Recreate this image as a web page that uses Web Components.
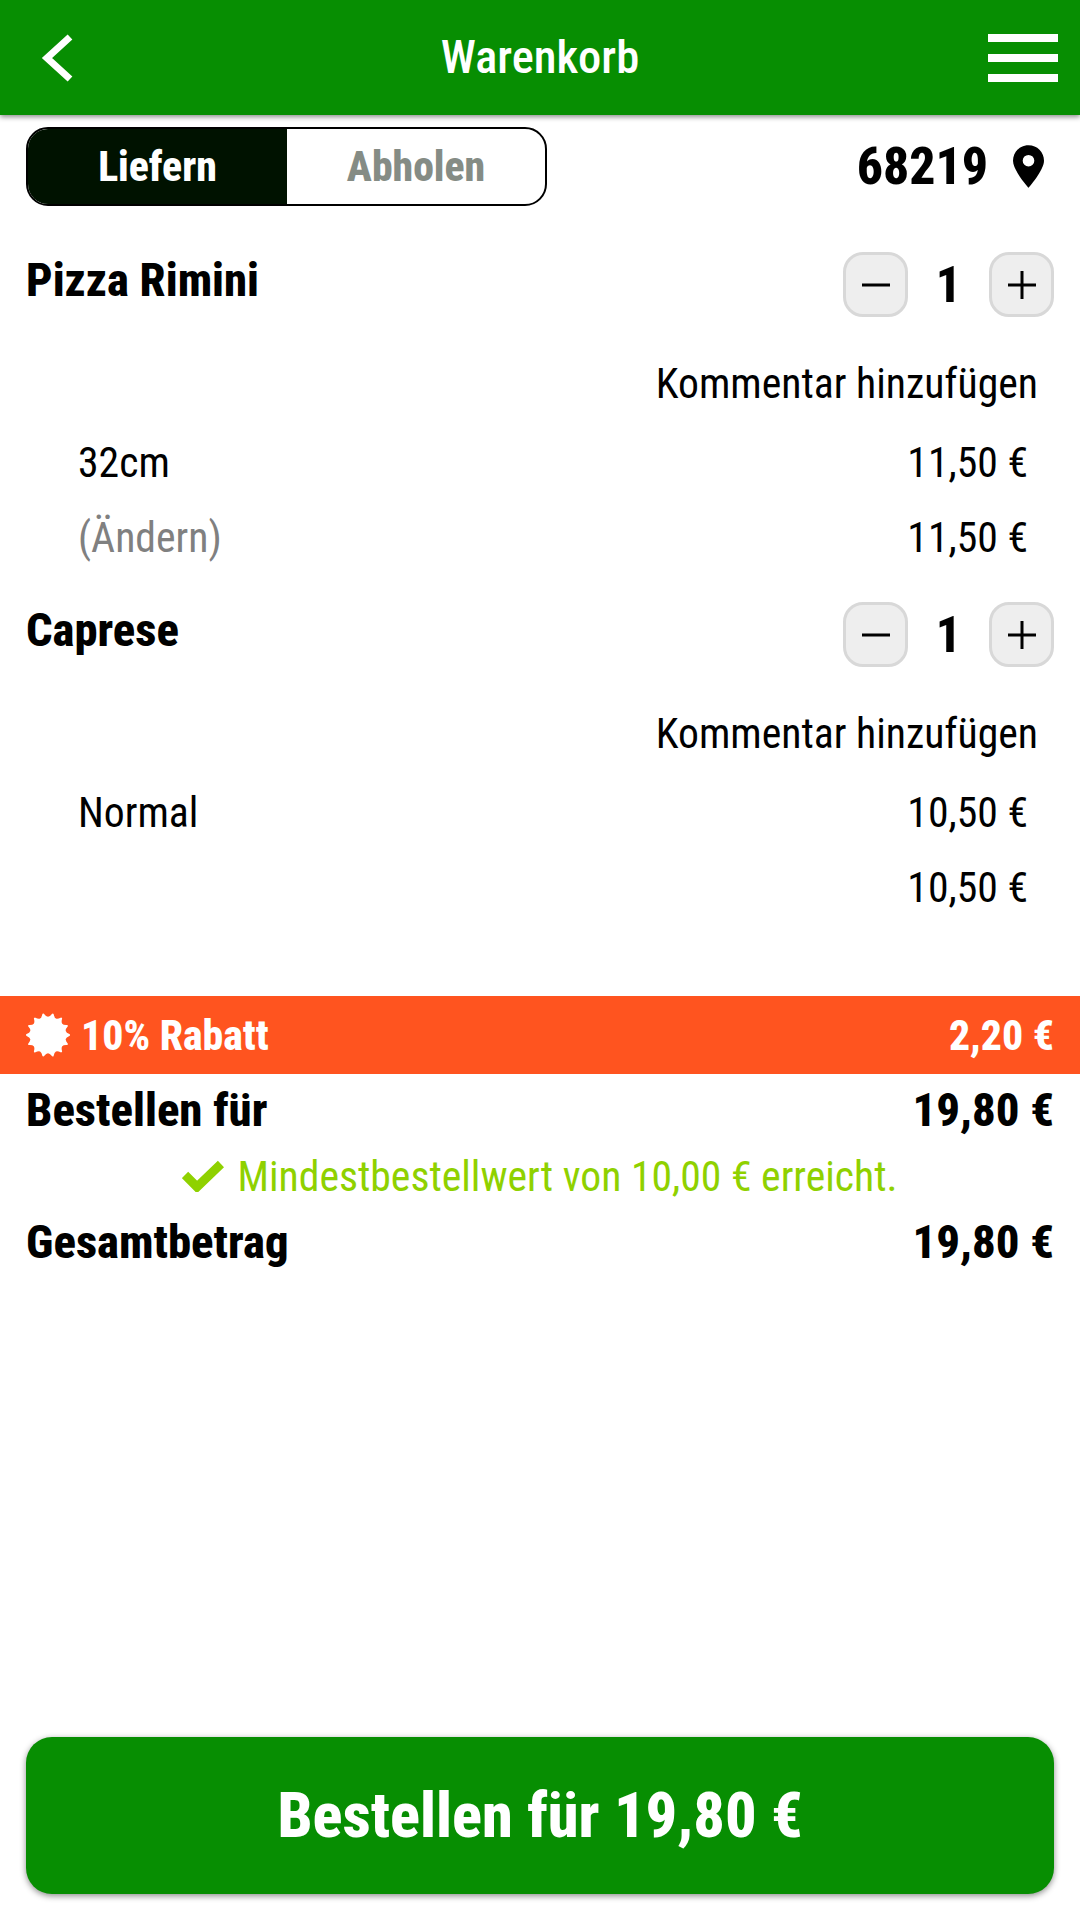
<!DOCTYPE html>
<html lang="de">
<head>
<meta charset="utf-8">
<title>Warenkorb</title>
<style>
  html, body { margin: 0; padding: 0; background: #fff; }
  body {
    display: flex;
    flex-direction: column;
    height: 1920px;
    width: 1080px;
    overflow: hidden;
    font-family: Roboto, "Liberation Sans", sans-serif;
    font-stretch: 75%;
    color: #000;
  }
</style>
</head>
<body>
<cart-header>Warenkorb</cart-header>
<order-bar zip="68219"></order-bar>
<cart-item name="Pizza Rimini" size="32cm" price="11,50 €" total="11,50 €" change></cart-item>
<cart-item name="Caprese" size="Normal" price="10,50 €" total="10,50 €"></cart-item>
<discount-bar label="10% Rabatt" amount="2,20 €"></discount-bar>
<total-row label="Bestellen für" amount="19,80 €" style="margin-top:6px"></total-row>
<min-note>Mindestbestellwert von 10,00 € erreicht.</min-note>
<total-row label="Gesamtbetrag" amount="19,80 €"></total-row>
<order-button>Bestellen für 19,80 €</order-button>

<script>
// cart-header
class CartHeader extends HTMLElement {
  constructor() {
    super();
    this.attachShadow({mode: 'open'});
    this.shadowRoot.innerHTML = `
      <style>
        :host {
          display: grid;
          grid-template-columns: 1fr auto 1fr;
          align-items: center;
          flex: none;
          height: 115px;
          padding: 0 22px 0 22px;
          background: #078e02;
          color: #fff;
          box-shadow: 0 2px 5px rgba(0,0,0,.45);
          position: relative;
          z-index: 1;
        }
        .title { font-size: 46.5px; font-weight: 500; line-height: 54px; margin-bottom: 2px; }
        svg { display: block; }
        .back { margin-left: 19px; }
        .menu { justify-self: end; }
      </style>
      <svg class="back" width="34" height="48" viewBox="0 0 34 48"><path d="M29 3 L6 24 L29 45" fill="none" stroke="#fff" stroke-width="7"/></svg>
      <span class="title"><slot></slot></span>
      <svg class="menu" width="70" height="48" viewBox="0 0 70 48"><path d="M0 0h70v8H0zM0 20h70v8H0zM0 40h70v8H0z" fill="#fff"/></svg>
    `;
  }
}
customElements.define('cart-header', CartHeader);

// order-bar: liefern / abholen switch and the zip code
class OrderBar extends HTMLElement {
  constructor() {
    super();
    this.attachShadow({mode: 'open'});
    this.shadowRoot.innerHTML = `
      <style>
        :host {
          display: flex;
          align-items: center;
          justify-content: space-between;
          flex: none;
          margin: 12px 0 19px;
          padding: 0 36px 0 26px;
        }
        .switch {
          display: grid;
          grid-template-columns: 259px 1fr;
          width: 521px;
          height: 79px;
          box-sizing: border-box;
          border: 2px solid #000;
          border-radius: 22px;
          overflow: hidden;
          font-size: 41.7px;
          font-weight: 800;
        }
        .switch span { display: flex; align-items: center; justify-content: center; }
        .on { background: #001200; color: #fff; }
        .off { color: #858c85; }
        .zip { display: flex; align-items: center; gap: 25px; font-size: 51.7px; font-weight: 800; }
      </style>
      <div class="switch"><span class="on">Liefern</span><span class="off">Abholen</span></div>
      <div class="zip"><span>${this.getAttribute('zip')}</span>
        <svg width="31" height="43" viewBox="0 0 32 44"><path fill-rule="evenodd" d="M16 0C7 0 0 7 0 16c0 10 16 28 16 28s16-18 16-28C32 7 25 0 16 0zm0 10a6 6 0 1 1 0 12 6 6 0 0 1 0-12z"/></svg>
      </div>
    `;
  }
}
customElements.define('order-bar', OrderBar);

// cart-item: one pizza with its qty stepper, comment link and prices
class CartItem extends HTMLElement {
  constructor() {
    super();
    this.attachShadow({mode: 'open'});
    const change = this.hasAttribute('change') ? '(Ändern)' : '';
    this.shadowRoot.innerHTML = `
      <style>
        :host { display: block; flex: none; padding: 27px 26px 0 26px; height: 350px; box-sizing: border-box; }
        .top { display: flex; justify-content: space-between; align-items: flex-start; height: 65px; }
        .name { font-size: 46.6px; font-weight: 800; line-height: 56px; }
        .qty { display: flex; align-items: center; }
        .btn {
          width: 65px; height: 65px; box-sizing: border-box;
          border: 3px solid #d8d8d8; border-radius: 20px; background: #eee;
          display: flex; align-items: center; justify-content: center;
        }
        .num { width: 81px; text-align: center; font-size: 50px; font-weight: 800; }
        .comment { text-align: right; font-size: 41.7px; line-height: 48px; padding: 43px 16px 17px 0; }
        .line {
          display: flex; justify-content: space-between;
          font-size: 41.7px; line-height: 48px; height: 75px; align-items: center;
          padding: 0 26px 0 52px;
        }
        .grey { color: #808080; }
      </style>
      <div class="top">
        <span class="name">${this.getAttribute('name')}</span>
        <div class="qty">
          <span class="btn"><svg width="28" height="28" viewBox="0 0 28 28"><path d="M0 14h28" stroke="#000" stroke-width="3"/></svg></span>
          <span class="num">1</span>
          <span class="btn"><svg width="28" height="28" viewBox="0 0 28 28"><path d="M0 14h28M14 0v28" stroke="#000" stroke-width="3"/></svg></span>
        </div>
      </div>
      <div class="comment">Kommentar hinzufügen</div>
      <div class="line"><span>${this.getAttribute('size')}</span><span>${this.getAttribute('price')}</span></div>
      <div class="line"><span class="grey">${change}</span><span>${this.getAttribute('total')}</span></div>
    `;
  }
}
customElements.define('cart-item', CartItem);

// discount-bar
class DiscountBar extends HTMLElement {
  constructor() {
    super();
    this.attachShadow({mode: 'open'});
    // scalloped badge: tips joined by soft curves
    const teeth = 14;
    let d = '';
    for (let i = 0; i < teeth; i++) {
      const a = i * 2 * Math.PI / teeth;
      const b = (i + 0.5) * 2 * Math.PI / teeth;
      const c = (i + 1) * 2 * Math.PI / teeth;
      if (i === 0) d += 'M' + (22 + 21 * Math.cos(a)).toFixed(1) + ' ' + (22 + 21 * Math.sin(a)).toFixed(1);
      d += 'Q' + (22 + 14 * Math.cos(b)).toFixed(1) + ' ' + (22 + 14 * Math.sin(b)).toFixed(1) + ' '
         + (22 + 21 * Math.cos(c)).toFixed(1) + ' ' + (22 + 21 * Math.sin(c)).toFixed(1);
    }
    this.shadowRoot.innerHTML = `
      <style>
        :host {
          display: flex; align-items: center; flex: none;
          height: 78px; margin-top: 71px; padding: 0 26px;
          background: #ff541f; color: #fff;
          font-size: 41.7px; font-weight: 800;
        }
        svg { margin-right: 11px; }
        .amount { margin-left: auto; }
      </style>
      <svg width="44" height="44" viewBox="0 0 44 44"><path d="${d}Z" fill="#fff" stroke="#fff" stroke-width="2" stroke-linejoin="round"/></svg>
      <span>${this.getAttribute('label')}</span>
      <span class="amount">${this.getAttribute('amount')}</span>
    `;
  }
}
customElements.define('discount-bar', DiscountBar);

// total-row
class TotalRow extends HTMLElement {
  constructor() {
    super();
    this.attachShadow({mode: 'open'});
    this.shadowRoot.innerHTML = `
      <style>
        :host {
          display: flex; justify-content: space-between; align-items: center; flex: none;
          height: 60px; padding: 0 26px;
          font-size: 46.7px; font-weight: 800;
        }
      </style>
      <span>${this.getAttribute('label')}</span><span>${this.getAttribute('amount')}</span>
    `;
  }
}
customElements.define('total-row', TotalRow);

// min-note
class MinNote extends HTMLElement {
  constructor() {
    super();
    this.attachShadow({mode: 'open'});
    this.shadowRoot.innerHTML = `
      <style>
        :host {
          display: flex; align-items: center; justify-content: center; gap: 13px; flex: none;
          height: 72px; font-size: 41.7px; color: #8fd100;
        }
      </style>
      <svg width="42" height="32" viewBox="0 0 42 32"><path d="M3 15 L15 27 L39 4" fill="none" stroke="#8fd100" stroke-width="9"/></svg>
      <span><slot></slot></span>
    `;
  }
}
customElements.define('min-note', MinNote);

// order-button
class OrderButton extends HTMLElement {
  constructor() {
    super();
    this.attachShadow({mode: 'open'});
    this.shadowRoot.innerHTML = `
      <style>
        :host {
          display: flex; align-items: center; justify-content: center; flex: none;
          height: 157px; margin: auto 26px 26px;
          background: #078e02; color: #fff; border-radius: 26px;
          box-shadow: 0 2px 6px rgba(0,0,0,.45);
          font-size: 62.3px; font-weight: 800;
        }
      </style>
      <slot></slot>
    `;
  }
}
customElements.define('order-button', OrderButton);
</script>
</body>
</html>
